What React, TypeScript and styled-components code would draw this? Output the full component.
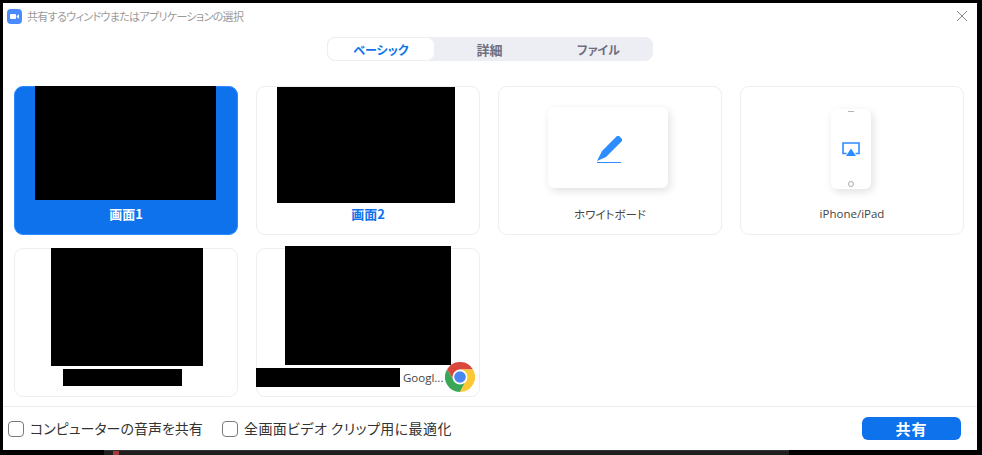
import * as React from "react";
import styled, { createGlobalStyle } from "styled-components";

const GlobalStyle = createGlobalStyle`
  html, body {
    margin: 0;
    padding: 0;
    background: #000;
    overflow: hidden;
  }
  body {
    font-family: "Noto Sans CJK JP", "Liberation Sans", sans-serif;
    font-feature-settings: "palt";
  }
`;

const Screen = styled.div`
  width: 982px;
  height: 455px;
  background: #000;
  padding: 3px 5px 0 3px;
  box-sizing: border-box;
`;

const Dialog = styled.div`
  width: 974px;
  height: 447px;
  background: #fff;
  display: flex;
  flex-direction: column;
`;

const TitleBar = styled.div`
  height: 26px;
  display: flex;
  align-items: center;
  padding: 0 9px 0 4px;
  gap: 5px;
`;

const Title = styled.div`
  flex: 1;
  font-size: 11px;
  letter-spacing: -0.65px;
  color: #9a9a9a;
`;

const TabRow = styled.div`
  margin-top: 8px;
  display: flex;
  justify-content: center;
`;

const Tabs = styled.div`
  width: 326px;
  height: 24px;
  background: #edeef4;
  border-radius: 8px;
  display: flex;
`;

const Tab = styled.div<{ $active?: boolean; $size: number }>`
  width: ${(p) => (p.$active ? "108px" : "109px")};
  display: flex;
  align-items: center;
  justify-content: center;
  font-size: ${(p) => p.$size}px;
  font-weight: 700;
  color: ${(p) => (p.$active ? "#0e72ed" : "#6e7080")};
  background: ${(p) => (p.$active ? "#fff" : "transparent")};
  border: ${(p) => (p.$active ? "1px solid #edeef4" : "none")};
  box-sizing: border-box;
  border-radius: 8px;
`;

const Grid = styled.div`
  margin-top: 25px;
  padding-left: 11px;
  display: grid;
  grid-template-columns: repeat(4, 224px);
  grid-auto-rows: 149px;
  column-gap: 18px;
  row-gap: 13px;
`;

const Card = styled.div<{ $selected?: boolean }>`
  position: relative;
  box-sizing: border-box;
  border-radius: 9px;
  border: 1px solid ${(p) => (p.$selected ? "#2d8cff" : "#eceef1")};
  background: ${(p) => (p.$selected ? "#0e72ed" : "#fff")};
  display: flex;
  flex-direction: column;
  align-items: center;
`;

const Thumb = styled.div<{ $w: number; $h: number; $top: number; $left?: number }>`
  width: ${(p) => p.$w}px;
  height: ${(p) => p.$h}px;
  margin-top: ${(p) => p.$top}px;
  margin-left: ${(p) => p.$left ?? 0}px;
  background: #000;
  flex: none;
`;

const Label = styled.div<{ $color?: string; $bold?: boolean }>`
  position: absolute;
  left: 0;
  right: 0;
  bottom: 11px;
  text-align: center;
  font-size: ${(p) => (p.$bold ? 13 : 11.5)}px;
  line-height: 18px;
  font-weight: ${(p) => (p.$bold ? 700 : 400)};
  color: ${(p) => p.$color ?? "#444"};
`;

const LatinLabel = styled(Label)`
  font-family: "Open Sans", "Liberation Sans", sans-serif;
  font-size: 11.5px;
`;

const Preview = styled.div<{ $w: number; $h: number; $top: number; $left: number }>`
  width: ${(p) => p.$w}px;
  height: ${(p) => p.$h}px;
  margin-top: ${(p) => p.$top}px;
  margin-left: ${(p) => p.$left}px;
  background: #fff;
  border-radius: 6px;
  box-shadow: 2px 3px 8px rgba(0, 0, 0, 0.12);
  display: flex;
  align-items: center;
  justify-content: center;
  position: relative;
  flex: none;
`;

const Earpiece = styled.div`
  position: absolute;
  top: 2px;
  left: 50%;
  margin-left: -3px;
  width: 6px;
  height: 1px;
  background: #b5b5b5;
`;

const HomeButton = styled.div`
  position: absolute;
  bottom: 2px;
  left: 50%;
  margin-left: -3px;
  width: 6px;
  height: 6px;
  box-sizing: border-box;
  border: 1px solid #aaa;
  border-radius: 50%;
`;

const WindowName = styled.div`
  margin-top: 3px;
  width: 100%;
  display: flex;
  align-items: center;
  font-family: "Open Sans", "Liberation Sans", sans-serif;
  font-size: 11.5px;
  color: #444;
`;

const NameMask = styled.div<{ $w: number; $h: number; $left?: number }>`
  width: ${(p) => p.$w}px;
  height: ${(p) => p.$h}px;
  margin-left: ${(p) => p.$left ?? 0}px;
  background: #000;
  flex: none;
`;

const GoogleName = styled.span`
  margin-left: 3px;
`;

const Badge = styled.div`
  position: absolute;
  right: 4px;
  bottom: 4px;
  width: 30px;
  height: 30px;
`;

const Footer = styled.div`
  margin-top: auto;
  height: 43px;
  border-top: 1px solid #ebebeb;
  display: flex;
  align-items: center;
  padding: 0 16px 0 5px;
`;

const CheckRow = styled.label<{ $width: number }>`
  width: ${(p) => p.$width}px;
  display: flex;
  align-items: center;
  gap: 6px;
`;

const CheckText = styled.span<{ $track?: number }>`
  font-size: 14px;
  letter-spacing: ${(p) => p.$track ?? 0}px;
  color: #333;
  margin-top: -2px;
`;

const CheckBox = styled.span`
  width: 16px;
  height: 16px;
  box-sizing: border-box;
  border: 1px solid #7b7b7b;
  border-radius: 4px;
  background: #fff;
  flex: none;
`;

const ShareButton = styled.button`
  margin-left: auto;
  width: 99px;
  height: 23px;
  border: none;
  border-radius: 6px;
  background: #0e72ed;
  color: #fff;
  font-family: inherit;
  font-size: 15px;
  font-weight: 700;
  padding: 0;
  letter-spacing: 1px;
`;

const TaskStrip = styled.div`
  height: 5px;
  width: 685px;
  margin-left: 101px;
  background: #1f1f1f;
  border-top: 1px solid #333;
  box-sizing: border-box;
  padding-left: 9px;
`;

const TaskMark = styled.div`
  width: 6px;
  height: 4px;
  background: #a33a3a;
`;

const ZoomLogo = () => (
  <svg width="15" height="15" viewBox="0 0 15 15">
    <rect width="15" height="15" rx="4" fill="#4a8cff" />
    <rect x="3" y="5" width="6" height="5" rx="1" fill="#fff" />
    <path d="M9.7 7l2.3-1.7v4.4L9.7 8z" fill="#fff" />
  </svg>
);

const CloseIcon = () => (
  <svg width="12" height="12" viewBox="0 0 12 12">
    <path d="M1 1l10 10M11 1L1 11" stroke="#8a8a8a" strokeWidth="1" fill="none" />
  </svg>
);

const PenIcon = () => (
  <svg width="28" height="30" viewBox="0 0 28 30">
    <path d="M3 28l5-10L23 3h2l3 3v2L12 24z" fill="#2d8cff" />
    <path d="M3 29.500h24" stroke="#2d8cff" strokeWidth="1" fill="none" />
  </svg>
);

const AirPlayIcon = () => (
  <svg width="18" height="15" viewBox="0 0 18 15">
    <path d="M4.500 11.500H1V1h16v10.500h-3.500" stroke="#2d8cff" strokeWidth="1.600" fill="none" />
    <path d="M9 6.500L14 14H4z" fill="#2d8cff" />
  </svg>
);

const ChromeIcon = () => (
  <svg width="30" height="30" viewBox="0 0 30 30">
    <circle cx="15" cy="15" r="15" fill="#fff" />
    <path d="M2 7.500A15 15 0 0 1 28 7.500H15L9 18.500z" fill="#d9483b" />
    <path d="M2 7.500A15 15 0 0 0 15 30L21 18.500H9z" fill="#3aa757" />
    <path d="M28 7.500A15 15 0 0 1 15 30L21 18.500 15 7.500z" fill="#fcc934" />
    <circle cx="15" cy="15" r="7.500" fill="#fff" />
    <circle cx="15" cy="15" r="5.800" fill="#4a86f0" />
  </svg>
);

export default function App() {
  return (
    <Screen>
      <GlobalStyle />
      <Dialog>
        <TitleBar>
          <ZoomLogo />
          <Title>共有するウィンドウまたはアプリケーションの選択</Title>
          <CloseIcon />
        </TitleBar>
        <TabRow>
          <Tabs>
            <Tab $active $size={12}>ベーシック</Tab>
            <Tab $size={13}>詳細</Tab>
            <Tab $size={12}>ファイル</Tab>
          </Tabs>
        </TabRow>
        <Grid>
          <Card $selected>
            <Thumb $w={181} $h={114} $top={-1} $left={-2} />
            <Label $color="#fff" $bold>画面1</Label>
          </Card>
          <Card>
            <Thumb $w={178} $h={116} $top={0} $left={-4} />
            <Label $color="#0e72ed" $bold>画面2</Label>
          </Card>
          <Card>
            <Preview $w={120} $h={81} $top={20} $left={-4}>
              <PenIcon />
            </Preview>
            <Label>ホワイトボード</Label>
          </Card>
          <Card>
            <Preview $w={40} $h={80} $top={22} $left={-2}>
              <Earpiece />
              <AirPlayIcon />
              <HomeButton />
            </Preview>
            <LatinLabel>iPhone/iPad</LatinLabel>
          </Card>
          <Card>
            <Thumb $w={152} $h={118} $top={-1} $left={2} />
            <WindowName>
              <NameMask $w={119} $h={17} $left={48} />
            </WindowName>
          </Card>
          <Card>
            <Thumb $w={166} $h={119} $top={-3} />
            <WindowName>
              <NameMask $w={144} $h={19} $left={-1} />
              <GoogleName>Googl...</GoogleName>
            </WindowName>
            <Badge>
              <ChromeIcon />
            </Badge>
          </Card>
        </Grid>
        <Footer>
          <CheckRow $width={214}>
            <CheckBox />
            <CheckText>コンピューターの音声を共有</CheckText>
          </CheckRow>
          <CheckRow $width={300}>
            <CheckBox />
            <CheckText $track={0.4}>全画面ビデオ クリップ用に最適化</CheckText>
          </CheckRow>
          <ShareButton>共有</ShareButton>
        </Footer>
      </Dialog>
      <TaskStrip>
        <TaskMark />
      </TaskStrip>
    </Screen>
  );
}
